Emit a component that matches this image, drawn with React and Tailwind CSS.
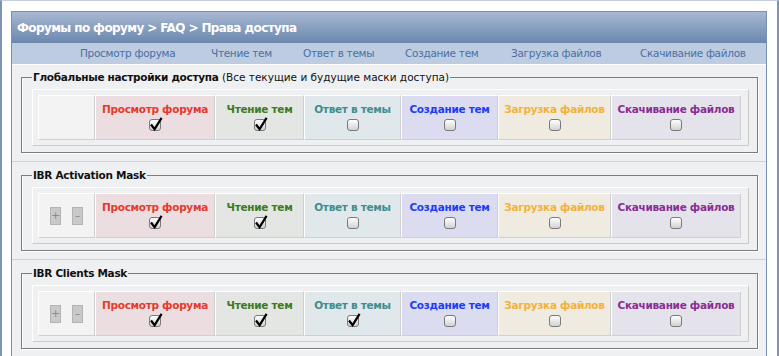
const PERMS = [
  { label: 'Просмотр форума', color: 'text-[#e43b2c]', bg: 'bg-[#ecdde0]', w: 'w-[120px]' },
  { label: 'Чтение тем', color: 'text-[#3e7a1f]', bg: 'bg-[#e3e6e3]', w: 'w-[89px]' },
  { label: 'Ответ в темы', color: 'text-[#3f8e8e]', bg: 'bg-[#e1e8eb]', w: 'w-[97px]' },
  { label: 'Создание тем', color: 'text-[#1d3cf5]', bg: 'bg-[#dcdcf1]', w: 'w-[97px]' },
  { label: 'Загрузка файлов', color: 'text-[#f3b23a]', bg: 'bg-[#efebe1]', w: 'w-[113px]' },
  { label: 'Скачивание файлов', color: 'text-[#8b2e93]', bg: 'bg-[#e4e3ec]', w: 'w-[130px]' },
];

const HEAD_LABELS = [
  { label: 'Просмотр форума', w: 'w-[131px]' },
  { label: 'Чтение тем', w: 'w-[92px]' },
  { label: 'Ответ в темы', w: 'w-[102px]' },
  { label: 'Создание тем', w: 'w-[106px]' },
  { label: 'Загрузка файлов', w: 'w-[129px]' },
  { label: 'Скачивание файлов', w: 'w-auto' },
];

const MASKS = [
  {
    title: 'Глобальные настройки доступа',
    note: '(Все текущие и будущие маски доступа)',
    checks: [true, true, false, false, false, false],
    buttons: false,
  },
  { title: 'IBR Activation Mask', checks: [true, true, false, false, false, false], buttons: true },
  { title: 'IBR Clients Mask', checks: [true, true, true, false, false, false], buttons: true },
];

function Checkbox({ checked }) {
  return (
    <span className="relative inline-block w-[12px] h-[12px] rounded-[3px] border border-[#7a7a7a] bg-linear-to-b from-white to-[#d2d2d2]">
      {checked && (
        <svg className="absolute left-[-1px] top-[-4px] w-[14px] h-[15px]" viewBox="0 0 14 15">
          <path d="M2 8.5 L5.6 13.2 L12.6 1.8" stroke="#000" strokeWidth="2.2" fill="none" />
        </svg>
      )}
    </span>
  );
}

function MiniButton({ children }) {
  return (
    <span className="w-[11px] h-[18px] flex items-center justify-center bg-[#c9c9c9] border border-[#b3b3b3] text-[11px] leading-none text-[#8a8a8a]">
      {children}
    </span>
  );
}

function MaskSection({ mask, first }) {
  return (
    <div className={`${first ? 'pt-[5px]' : 'pt-[6px]'} pb-[8px] pl-[9px] pr-[8px] border-b border-[#d2d2d2]`}>
      <fieldset className="border border-[#7c7c7c] shadow-[inset_1px_0_0_#fff,1px_1px_0_#fff] pl-[10px] pr-[8px] pb-[6px]">
        <legend className="px-[1px] text-[10.5px] leading-[14px] text-[#111]">
          <span className="font-bold tracking-[-0.3px]">{mask.title}</span>
          {mask.note && <span> {mask.note}</span>}
        </legend>
        <div className="mt-[5px] border border-t-white border-l-white border-b-[#cbcbcb] border-r-[#cbcbcb] p-[5px]">
          <div className="flex">
            <div className="w-[57px] h-[45px] flex items-center justify-center gap-[11px] bg-[#f3f3f3] border border-t-white border-l-white border-b-[#cfcfcf] border-r-[#cfcfcf]">
              {mask.buttons && (
                <>
                  <MiniButton>+</MiniButton>
                  <MiniButton>–</MiniButton>
                </>
              )}
            </div>
            {PERMS.map((p, i) => (
              <div
                key={p.label}
                className={`${p.w} ${p.bg} h-[45px] flex flex-col items-center pt-[6px] border border-t-white border-l-white border-b-[#cfcfcf] border-r-[#cfcfcf]`}
              >
                <span className={`${p.color} font-bold text-[10.5px] tracking-[-0.3px] leading-[14px] whitespace-nowrap`}>
                  {p.label}
                </span>
                <span className="mt-[3px] flex">
                  <Checkbox checked={mask.checks[i]} />
                </span>
              </div>
            ))}
          </div>
        </div>
      </fieldset>
    </div>
  );
}

export default function App() {
  return (
    <div className="w-[779px] h-[356px] overflow-hidden bg-white border-l-2 border-r-2 border-t border-l-[#7d93b5] border-r-[#7d93b5] border-t-[#c3cede] pt-[10px] pl-[9px] pr-[10px] font-['DejaVu_Sans',sans-serif]">
      <div className="border border-[#7990b2] bg-[#eff0f2]">
        <div className="h-[31px] flex items-center pl-[5px] bg-linear-to-b from-[#a8b9d3] to-[#6b87ae]">
          <h1 className="text-white font-bold text-[12px] tracking-[-0.6px] leading-none">
            Форумы по форуму &gt; FAQ &gt; Права доступа
          </h1>
        </div>
        <div className="h-[22px] flex items-center pl-[68px] bg-[#bdcce0] border-b border-white">
          {HEAD_LABELS.map((h) => (
            <span key={h.label} className={`${h.w} shrink-0 text-[10.5px] tracking-[-0.3px] text-[#4a6fa6] whitespace-nowrap`}>
              {h.label}
            </span>
          ))}
        </div>
        {MASKS.map((m, i) => (
          <MaskSection key={m.title} mask={m} first={i === 0} />
        ))}
      </div>
    </div>
  );
}
